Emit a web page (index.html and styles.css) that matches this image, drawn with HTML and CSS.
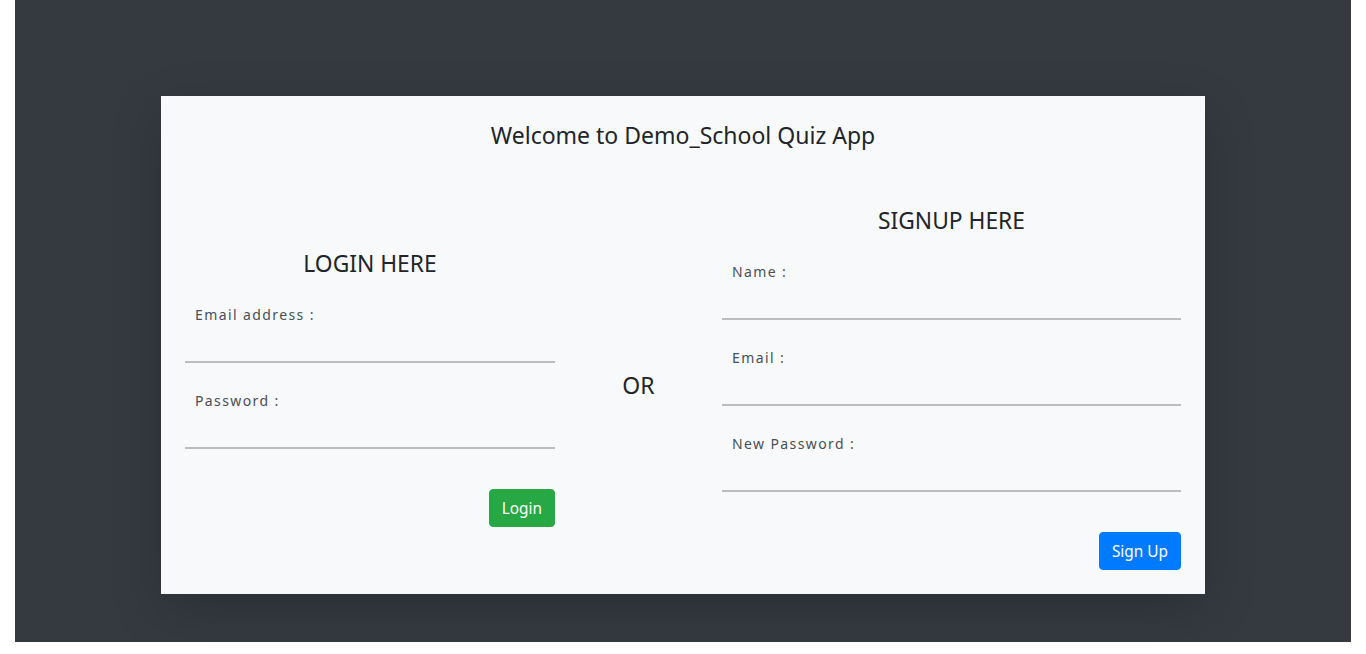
FILE: index.html
```html
<!DOCTYPE html>
<html lang="en">
<head>
<meta charset="utf-8">
<title>Demo_School Quiz App</title>
<link rel="stylesheet" href="styles.css">
</head>
<body>
<div class="stage">
  <div class="card">
    <h4 class="title">Welcome to Demo_School Quiz App</h4>
    <div class="row">
      <form class="col col-login">
        <h4 class="col-heading">LOGIN HERE</h4>
        <div class="field">
          <label class="field-label">Email address :</label>
          <input class="field-input" type="email">
        </div>
        <div class="field">
          <label class="field-label">Password :</label>
          <input class="field-input" type="password">
        </div>
        <div class="actions">
          <button type="button" class="btn btn-green">Login</button>
        </div>
      </form>
      <div class="or">OR</div>
      <form class="col col-signup">
        <h4 class="col-heading">SIGNUP HERE</h4>
        <div class="field">
          <label class="field-label">Name :</label>
          <input class="field-input" type="text">
        </div>
        <div class="field">
          <label class="field-label">Email :</label>
          <input class="field-input" type="email">
        </div>
        <div class="field">
          <label class="field-label">New Password :</label>
          <input class="field-input" type="password">
        </div>
        <div class="actions">
          <button type="button" class="btn btn-blue">Sign Up</button>
        </div>
      </form>
    </div>
  </div>
</div>
</body>
</html>
```
FILE: styles.css
```css
* { box-sizing: border-box; }
html, body { margin: 0; padding: 0; background: #ffffff; }
body {
  font-family: "Noto Sans", "Open Sans", sans-serif;
  color: #212529;
}
.stage {
  margin: 0 15px;
  height: 642px;
  background: #343a40;
  padding-top: 96px;
  display: flex;
  justify-content: center;
  align-items: flex-start;
}
.card {
  width: 1044px;
  background: #f8f9fa;
  padding: 25px 24px 24px;
  box-shadow: 0 1rem 3rem rgba(0, 0, 0, 0.175);
}
.title {
  margin: 0;
  text-align: center;
  font-size: 23px;
  font-weight: 400;
  line-height: 29px;
}
.row {
  margin-top: 56px;
  display: flex;
  align-items: center;
}
.col {
  margin: 0;
  display: flex;
  flex-direction: column;
}
.col-login { width: 370px; }
.col-signup { width: 459px; }
.or {
  flex: 1;
  text-align: center;
  font-size: 23px;
  line-height: 29px;
  padding-bottom: 6px;
}
.col-heading {
  margin: 0 0 25px;
  text-align: center;
  font-size: 22.8px;
  font-weight: 400;
  line-height: 29px;
}
.field {
  display: flex;
  flex-direction: column;
  margin-bottom: 26px;
}
.field-label {
  padding-left: 10px;
  padding-top: 1px;
  font-size: 14px;
  line-height: 22px;
  letter-spacing: 1.4px;
  color: #495057;
}
.field-input {
  height: 37px;
  border: none;
  border-bottom: 2px solid #bdbdbd;
  background: transparent;
  outline: none;
  font: inherit;
}
.actions {
  margin-top: 14px;
  display: flex;
  justify-content: flex-end;
}
.btn {
  height: 38px;
  padding: 1px 12px 0;
  border: 1px solid transparent;
  border-radius: 4px;
  color: #ffffff;
  font-family: inherit;
  font-size: 15.4px;
  line-height: 35px;
  cursor: pointer;
}
.btn-green { background: #28a745; border-color: #28a745; }
.btn-blue { background: #007bff; border-color: #007bff; }
```
